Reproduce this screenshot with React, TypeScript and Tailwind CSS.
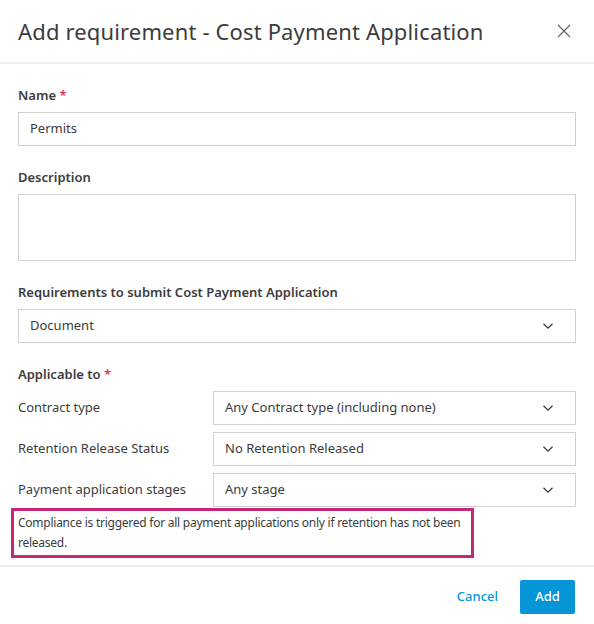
import React from "react";

const Chevron = () => (
  <svg width="14" height="14" viewBox="0 0 14 14" fill="none">
    <path d="M2.5 4.8 L7 9.2 L11.5 4.8" stroke="#3c3c3c" strokeWidth="1.3" />
  </svg>
);

const Select = ({ value, className = "" }: { value: string; className?: string }) => (
  <div className={`flex h-[34px] items-center justify-between border border-[#d0d0d0] bg-white pl-[11px] pr-[20px] text-[13px] text-[#3c3c3c] ${className}`}>
    <span>{value}</span>
    <Chevron />
  </div>
);

export default function App() {
  return (
    <div className="w-[594px] h-[624px] bg-white text-[#3c3c3c]" style={{ fontFamily: '"Noto Sans", sans-serif' }}>
      <div className="flex h-[64px] items-center justify-between border-b-2 border-[#eeeeee] pl-[18px] pr-[22px]">
        <h1 className="text-[22px] font-normal text-[#3c3c3c] tracking-[0.15px]">Add requirement - Cost Payment Application</h1>
        <svg width="16" height="16" viewBox="0 0 16 16" fill="none">
          <path d="M2 2 L14 14 M14 2 L2 14" stroke="#666" strokeWidth="1.3" />
        </svg>
      </div>
      <div className="px-[18px] pt-[22px]">
        <div className="text-[13px] font-semibold leading-[18px]">
          Name <span className="text-[#e5334b]">*</span>
        </div>
        <div className="mt-[8px] flex h-[34px] items-center border border-[#d0d0d0] pl-[11px] text-[13px]">Permits</div>
        <div className="mt-[22px] text-[13px] font-semibold leading-[18px]">Description</div>
        <div className="mt-[8px] h-[67px] border border-[#d0d0d0]"></div>
        <div className="mt-[22px] text-[13px] font-semibold leading-[18px]">Requirements to submit Cost Payment Application</div>
        <Select className="mt-[8px]" value="Document" />
        <div className="mt-[22px] text-[13px] font-semibold leading-[18px]">
          Applicable to <span className="text-[#e5334b]">*</span>
        </div>
        <div className="mt-[8px] flex flex-col gap-[7px]">
          {[
            ["Contract type", "Any Contract type (including none)"],
            ["Retention Release Status", "No Retention Released"],
            ["Payment application stages", "Any stage"],
          ].map(([l, v]) => (
            <div key={l} className="flex items-center">
              <div className="w-[195px] text-[13px]">{l}</div>
              <Select className="flex-1" value={v} />
            </div>
          ))}
        </div>
      </div>
      <div className="ml-[11px] mt-[1px] w-[463px] border-[3px] border-[#c4287a] pl-[4px] pr-0 py-[2px] text-[12px] leading-[20px] tracking-[-0.25px] text-[#3c3c3c]">
        Compliance is triggered for all payment applications only if retention has not been released.
      </div>
      <div className="mt-[7px] flex h-[58px] items-end justify-end border-t-2 border-[#eeeeee] pr-[19px] pb-[9px] gap-[22px]">
        <button className="h-[34px] px-0 text-[13px] font-medium text-[#0696d7]">Cancel</button>
        <button className="h-[34px] w-[55px] rounded-[2px] bg-[#0696d7] text-[13px] font-medium text-white">Add</button>
      </div>
    </div>
  );
}
